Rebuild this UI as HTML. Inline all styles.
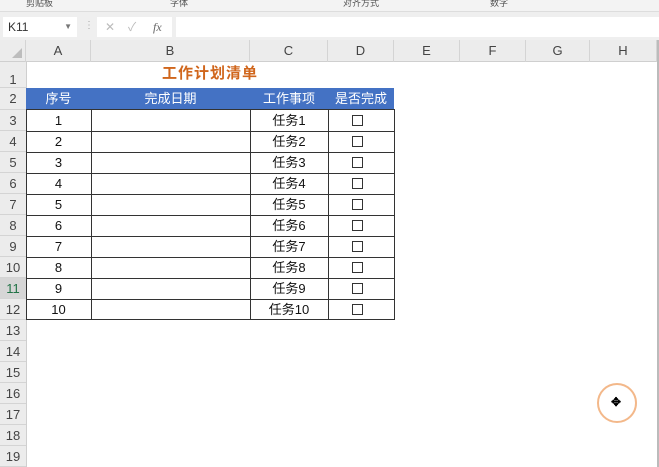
<!DOCTYPE html>
<html><head><meta charset="utf-8"><style>
*{margin:0;padding:0;box-sizing:border-box}
body{width:659px;height:467px;overflow:hidden;background:#fff;font-family:"Liberation Sans","Noto Sans CJK SC",sans-serif;position:relative}
.a{position:absolute}
.ch{position:absolute;top:40px;height:22px;line-height:22px;text-align:center;font-size:13px;color:#444;border-right:1px solid #d4d4d4}
.rh{position:absolute;left:0;width:26px;text-align:center;font-size:13px;color:#444;border-bottom:1px solid #d4d4d4;background:#ececec}
.c{position:absolute;text-align:center;font-size:13px;color:#111;height:21px;line-height:21px;white-space:nowrap}
.bx{position:absolute;width:11px;height:11px;border:1px solid #333}
</style></head><body>
<div class="a" style="left:0;top:0;width:659px;height:12px;background:#f3f3f3;border-bottom:1px solid #ddd"></div>
<div class="a" style="left:26px;top:-4px;font-size:9px;color:#555">剪贴板</div>
<div class="a" style="left:170px;top:-4px;font-size:9px;color:#555">字体</div>
<div class="a" style="left:343px;top:-4px;font-size:9px;color:#555">对齐方式</div>
<div class="a" style="left:490px;top:-4px;font-size:9px;color:#555">数字</div>
<div class="a" style="left:0;top:12px;width:659px;height:28px;background:#efefef"></div>
<div class="a" style="left:3px;top:17px;width:74px;height:20px;background:#fff;font-size:12px;line-height:20px;padding-left:5px;color:#333">K11<span style="position:absolute;right:5px;font-size:8px;color:#777">▼</span></div>
<div class="a" style="left:84px;top:20px;font-size:10px;color:#aaa">⋮</div>
<div class="a" style="left:97px;top:17px;width:75px;height:20px;background:#fff;font-size:12px;line-height:20px;color:#bbb"><span style="position:absolute;left:8px">✕</span><span style="position:absolute;left:31px">✓</span><span style="position:absolute;left:56px;font-style:italic;color:#666;font-family:'Liberation Serif',serif">fx</span></div>
<div class="a" style="left:176px;top:17px;width:483px;height:20px;background:#fff"></div>
<div class="a" style="left:0;top:40px;width:659px;height:22px;background:#ececec;border-bottom:1px solid #cfcfcf"></div>
<div class="a" style="left:12px;top:48px;width:0;height:0;border-left:10px solid transparent;border-bottom:10px solid #bdbdbd"></div>
<div class="ch" style="left:0;width:26px"></div>
<div class="ch" style="left:26px;width:65px">A</div>
<div class="ch" style="left:91px;width:159px">B</div>
<div class="ch" style="left:250px;width:78px">C</div>
<div class="ch" style="left:328px;width:66px">D</div>
<div class="ch" style="left:394px;width:66px">E</div>
<div class="ch" style="left:460px;width:66px">F</div>
<div class="ch" style="left:526px;width:64px">G</div>
<div class="ch" style="left:590px;width:67px">H</div>
<div class="a" style="left:657px;top:40px;width:2px;height:427px;background:#bbb"></div>
<div class="rh" style="top:62px;height:26px;line-height:36px">1</div>
<div class="rh" style="top:88px;height:22px;line-height:22px">2</div>
<div id="rows"></div>
<div class="a" style="left:26px;top:62px;width:1px;height:405px;background:#cfcfcf"></div>
<div class="a" style="left:26px;top:63px;width:368px;text-align:center;font-size:15px;line-height:22px;font-weight:bold;color:#d0661c;letter-spacing:1px">工作计划清单</div>
<div class="a" style="left:26px;top:88px;width:368px;height:22px;background:#4472c4"></div>
<div class="c" style="left:26px;top:88px;width:65px;color:#fff">序号</div>
<div class="c" style="left:91px;top:88px;width:159px;color:#fff">完成日期</div>
<div class="c" style="left:250px;top:88px;width:78px;color:#fff">工作事项</div>
<div class="c" style="left:328px;top:88px;width:66px;color:#fff">是否完成</div>
<div class="a" style="left:26px;top:109px;width:369px;height:211px;border:1px solid #333"></div>
<div class="a" style="left:91px;top:110px;width:1px;height:210px;background:#333"></div>
<div class="a" style="left:250px;top:110px;width:1px;height:210px;background:#333"></div>
<div class="a" style="left:328px;top:110px;width:1px;height:210px;background:#333"></div>
<div id="t"></div>
<div class="a" style="left:597px;top:383px;width:40px;height:40px;border:2.5px solid #f3b88a;border-radius:50%"></div>
<div class="a" style="left:611px;top:395px;font-size:12px;color:#000;font-weight:bold">✥</div>
<script>
var r='',t='';
for(var i=3;i<=19;i++){var y=110+(i-3)*21;
r+='<div class="rh" style="top:'+y+'px;height:21px;line-height:21px;'+(i==11?'background:#d6d6d6;color:#217346;':'')+'">'+i+'</div>';}
for(var i=0;i<10;i++){var y=110+i*21;
if(i>0)t+='<div class="a" style="left:26px;top:'+y+'px;width:368px;height:1px;background:#333"></div>';
t+='<div class="c" style="left:26px;top:'+y+'px;width:65px">'+(i+1)+'</div>';
t+='<div class="c" style="left:250px;top:'+y+'px;width:78px">任务'+(i+1)+'</div>';
t+='<div class="bx" style="left:352px;top:'+(y+5)+'px"></div>';}
document.getElementById('rows').innerHTML=r;document.getElementById('t').innerHTML=t;
</script>
</body></html>
